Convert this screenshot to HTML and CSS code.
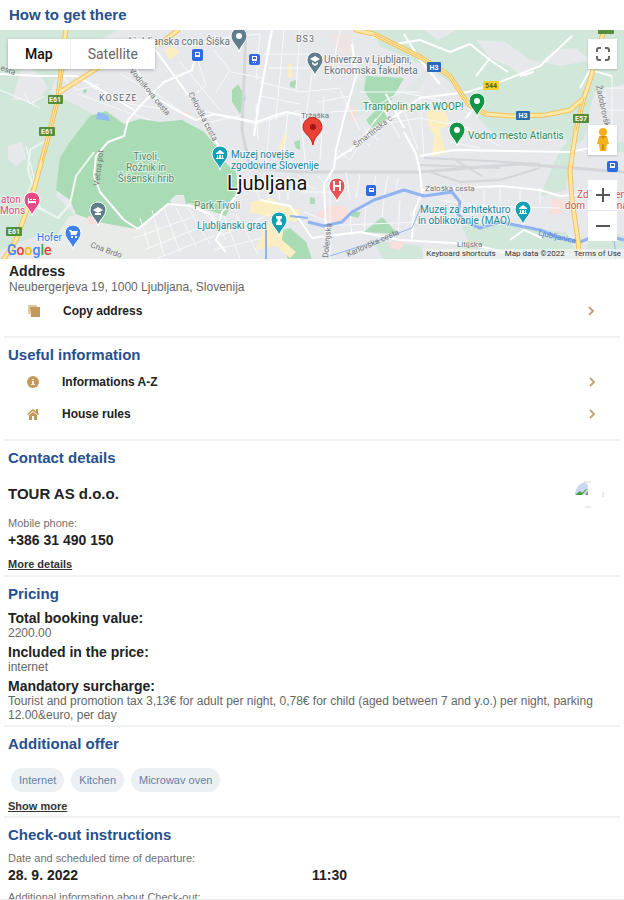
FILE: index.html
```html
<!DOCTYPE html>
<html lang="en">
<head>
<meta charset="utf-8">
<meta name="viewport" content="width=device-width, initial-scale=1">
<title>Booking details</title>
<link rel="stylesheet" href="styles.css">
</head>
<body>
<main class="page">
  <h2 class="title title-map">How to get there</h2>
  <div class="map">
    <svg class="map-canvas" viewBox="0 30 624 229" preserveAspectRatio="xMidYMid slice" role="img" aria-label="Map of Ljubljana">
      <defs>
        <path id="pin" d="M0 13C-1 7-8 3-8-3A8 8 0 0 1 8-3C8 3 1 7 0 13Z"/>
      </defs>
      <rect y="30" width="624" height="229" fill="#e6e8ec"/>
      <!-- parkland -->
      <g fill="#d1e7da">
        <path d="M0 30H118L100 40 84 64 58 74 50 92 82 108 110 124 90 134 66 160 56 196 74 214 70 224 56 240 36 236 0 250Z"/>
        <path d="M372 30H624V84L594 92 584 140 574 145 562 138 500 140 476 116 452 84 430 68 380 46Z"/>
        <path d="M440 56L400 96 366 72 352 88 344 122 360 116 380 108 412 100Z" opacity=".35"/>
        <path d="M560 150L576 132 566 190 540 196Z"/>
        <path d="M462 226L490 222 520 228 566 232 580 259H440L470 246Z"/>
        <path d="M372 240L420 246 426 259H384Z"/>
        <path d="M592 142H624V152H592ZM590 226L624 236V259H586Z"/>
      </g>
      <g fill="#e6e8ec">
        <path d="M12 100L22 66 40 74 48 88 34 104 20 100Z"/>
        <path d="M476 40L506 42 530 60 562 66 590 60 576 48 554 50 534 68 526 78 508 66 490 58Z"/>
        <path d="M424 30H456L438 40Z"/>
        <path d="M8 146L22 142 26 158 16 166 8 160Z"/>
      </g>
      <g fill="#e9ebe8"><path d="M70 216L150 222 176 232 160 259H20L56 236Z"/></g>
      <g fill="#a9dbb4">
        <path d="M70 142L90 116 106 111 124 124 140 119 160 122 182 120 204 132 216 146 220 158 236 172 238 188 226 216 208 210 190 203 178 206 168 204 136 229 98 222 76 214 70 200 56 190 60 158Z"/>
        <path d="M232 90L238 84 246 98 240 114 232 102Z"/>
        <path d="M366 76L404 78 390 102 384 112 388 118 372 128 366 120 376 110 370 100 364 90Z"/>
        <path d="M364 232L382 217 398 234Z"/>
        <path d="M276 232L290 228 306 242 312 259H288L282 246Z"/>
        <circle cx="85" cy="91" r="2"/><path d="M290 82L296 80 295 88 290 87ZM294 142L300 140V150L296 148ZM352 211L361 212 358 218 351 216ZM310 197L315 198V204H310Z"/>
      </g>
      <path d="M170 200L176 195H184L186 205L172 207Z" fill="#e6e8ec"/>
      <path d="M98 112L108 115 110 121 96 119Z" fill="#92b8f6"/>
      <g fill="#faeec2">
        <path d="M164 50L172 46 180 52 170 60ZM250 202L272 198 282 206 300 210 296 222 272 218 250 212ZM266 222L284 226 282 240 296 252 290 258 276 246 256 250ZM426 108L446 112 450 124 440 130 446 154 432 156 434 136 428 124ZM284 134L288 136 282 150 278 148ZM288 64H292V78H288Z"/>
      </g>
      <g fill="#f8dfdc">
        <path d="M316 214L328 206 346 206 350 216 344 224 320 218ZM552 198L564 200 562 214 548 214 552 206ZM182 112H190V118H182ZM350 104L356 110V122L350 120ZM390 242L406 240 400 250 390 248ZM88 216L98 218 98 224H88Z"/>
        <path d="M330 34L352 34 352 56 342 56Z" opacity=".5"/>
      </g>
      <!-- railway yard -->
      <g fill="none" stroke="#d3d6db">
        <path d="M246 30L242 130 250 168 300 172 420 172 520 164 624 172" stroke-width="3"/>
        <path d="M424 158L470 160 540 164M430 172L460 182 500 180 540 168M420 165L500 168M452 158L482 176" stroke-width="2"/>
      </g>
      <!-- side streets -->
      <g fill="none" stroke="#f8f9fb" stroke-width="1">
        <path d="M180 62L220 110M196 54L206 86 190 98M214 50L230 70 216 92M222 38L260 34 256 80M260 82L300 92 340 88M270 34L262 84M284 30L276 120M300 30L296 90M314 60L304 130M264 54H320M268 68H318M260 96L300 104M232 72L262 78M200 110L256 124 300 110M210 122L240 116M256 104L258 140M270 118L266 168M288 112L282 168M300 112L306 168M324 96L320 160M340 90L360 130M318 102L350 96M330 112L366 110M340 30L330 80M352 40L358 78M360 92H420M366 112L400 92 440 100M384 124L420 118 470 128M402 104L418 150M420 98L424 156M350 152L384 110 400 138M338 150L350 160 376 118M358 138L370 146M364 128L378 140M318 176L340 200M330 172V258M346 172L350 200M360 174L356 198M376 176L372 196M388 176L384 196M398 178L396 190M300 180L316 190M302 192H330M304 212L324 220M320 226L420 222M350 216L352 236M366 206L364 232M384 200L382 218M400 200L398 234M412 212V240M250 176L260 200M262 174L270 202M276 176L280 200M288 176V200M140 218L150 250M152 210L164 256M164 208L180 252M176 208L196 246M188 208L210 244M134 238L190 218M144 250L204 226M158 258L214 236M200 208L222 232M212 212L226 240M224 216L240 258M236 214L258 254M220 236L270 214M214 250L262 238M230 226L260 222M462 206L460 196M484 208V190M500 204V186M520 206V190M540 204V188M440 200L480 206 560 208M596 88H624M600 110H624M604 92V132M612 76V130M446 120L470 130 500 146M450 142L480 148"/>
        <path d="M26 146L34 178 24 202 50 214M0 90L24 100 40 108M24 92L30 104 44 96M60 76L78 90 100 84M78 94L110 106 150 120M90 86L130 104 170 110M120 74L160 96 190 118"/>
      </g>
      <!-- main streets -->
      <g fill="none" stroke="#fff" stroke-width="2" stroke-linejoin="round">
        <path d="M0 74L40 76 76 76 98 88 134 110"/>
        <path d="M154 48L176 78 196 106 214 138 222 152"/>
        <path d="M134 62L146 92 180 112 196 120 214 114 256 122 286 112 306 116"/>
        <path d="M196 52L192 70 174 78 164 82 140 106 128 120 124 136 108 142 96 156 94 176 100 192 124 220 138 229"/>
        <path d="M138 229L168 204 190 206 210 214 218 226 222 212 238 194 238 178"/>
        <path d="M94 152L76 176 70 204 58 218 40 208 28 170 30 150 50 138" stroke="#eef6f0"/>
        <path d="M168 38L148 52 154 70M272 30L258 108 254 136M352 44L356 76 344 118 336 150 334 168 324 184 326 232"/>
        <path d="M404 132L416 154 420 172 422 192 414 212 412 238"/>
        <path d="M334 160L350 150 384 124 420 98 468 92M404 128L386 94M468 92L500 82 540 66 572 36"/>
        <path d="M420 156L454 150 570 152 590 148M422 190L500 186 540 190 560 196 590 194"/>
        <path d="M312 238L360 232 400 240 470 244 520 256M222 228L216 240 226 252M260 200L290 206 312 238M440 84L420 60 404 34M466 118L480 100"/>
        <path d="M372 36L396 44 420 40 450 52 470 44 490 60 508 72M520 76L534 72M490 58L476 76M510 240L524 230 542 238M580 88L590 70 612 76"/>
      </g>
      <!-- river -->
      <g fill="none" stroke="#91b3f2" stroke-width="2" stroke-linejoin="round">
        <path d="M266 259V228M290 216L308 218"/>
        <path d="M308 222L324 226 342 222 352 212 374 200 404 190 424 196 452 192 460 202 458 214 466 222 480 228 500 222 520 226 540 230 560 238 580 242 600 234 624 240" stroke-width="3"/>
        <path d="M330 256L380 240 412 228 422 204M614 238L616 259" stroke-width="1"/>
      </g>
      <!-- motorways -->
      <g fill="none" stroke-linejoin="round" stroke-linecap="round">
        <path d="M66 28L58 98 48 138 32 196 16 240 2 262M60 92L104 64M178 30L160 44M356 30L374 34 422 58 450 76 468 104 486 114 510 116 546 115 570 110 584 98 590 80 604 30M584 98L576 130 570 170 572 200 578 240 580 262" stroke="#f3c15f" stroke-width="5"/>
        <path d="M66 28L58 98 48 138 32 196 16 240 2 262M60 92L104 64M178 30L160 44M356 30L374 34 422 58 450 76 468 104 486 114 510 116 546 115 570 110 584 98 590 80 604 30M584 98L576 130 570 170 572 200 578 240 580 262" stroke="#ffe7a6" stroke-width="3"/>
        <path d="M62 66L58 98 48 138 42 162M374 34L422 58 450 76 468 104 486 114M584 98L576 130" stroke="#f3c15f" stroke-width="1"/>
      </g>
      <!-- road shields -->
      <g class="shield">
        <g fill="#578c3a"><rect x="48" y="95" width="15" height="9" rx="1"/><rect x="39" y="127" width="16" height="9" rx="1"/><rect x="6" y="227" width="16" height="9" rx="1"/><rect x="573" y="114" width="16" height="9" rx="1"/><rect x="598" y="30" width="16" height="4" rx="1"/></g>
        <g fill="#2c69b5"><rect x="427" y="62" width="14" height="10" rx="1"/><rect x="516" y="111" width="14" height="9" rx="1"/></g>
        <rect x="483" y="81" width="16" height="9" rx="1" fill="#f7d02f"/>
        <g fill="#fff"><text x="55" y="102">E61</text><text x="47" y="134">E61</text><text x="14" y="234">E61</text><text x="581" y="121">E57</text><text x="434" y="70">H3</text><text x="523" y="118">H3</text></g>
        <text x="491" y="88" fill="#6a5a17">544</text>
      </g>
      <!-- transit stops -->
      <g fill="#2f6be0"><rect x="192" y="49" width="11" height="12" rx="2"/><rect x="249" y="54" width="11" height="11" rx="2"/><rect x="366" y="185" width="10" height="11" rx="2"/><rect x="607" y="161" width="11" height="11" rx="2"/></g>
      <g fill="#fff"><path d="M195 52H200V57H195ZM252 56H257V61H252ZM369 188H374V192H369ZM610 163H615V168H610ZM253 62H254V63H253ZM255 62H256V63H255Z"/></g>
      <g fill="#2f6be0"><path d="M196 53H199V55H196ZM253 57H256V59H253ZM611 164H614V166H611ZM370 189H373V190H370Z"/></g>
      <!-- street names -->
      <g class="street">
        <text transform="translate(129 71) rotate(50)">Vodnikova cesta</text>
        <text transform="translate(188 94) rotate(62)">Celovška cesta</text>
        <text transform="translate(99 186) rotate(-83)">Večna pot</text>
        <text transform="translate(90 247) rotate(20)">Cna Brdo</text>
        <text transform="translate(356 148) rotate(-38)">Šmartinska c.</text>
        <text transform="translate(596 86) rotate(78)">Žadobrovška</text>
        <text x="425" y="191">Zaloška cesta</text>
        <text transform="translate(348 257) rotate(-24)">Karlovška cesta</text>
        <text transform="translate(328 258) rotate(-84)">Dolenjska</text>
        <text x="457" y="247">Litijska</text>
        <text transform="translate(0 70) rotate(20)">esta</text>
        <text x="301" y="118">Tržaška</text>
        <text transform="translate(538 235) rotate(13)" fill="#4c7fd6">Ljubljanica</text>
      </g>
      <!-- places -->
      <g class="place">
        <g fill="#66747c"><text x="230" y="45" text-anchor="end">Ljubljanska cona Šiška</text><text x="324" y="63">Univerza v Ljubljani,</text><text x="324" y="74">Ekonomska fakulteta</text></g>
        <g fill="#2f8a56"><text x="363" y="110">Trampolin park WOOP!</text><text x="468" y="139">Vodno mesto Atlantis</text></g>
        <g fill="#55896a"><text x="146" y="160" text-anchor="middle">Tivoli,</text><text x="146" y="171" text-anchor="middle">Rožnik in</text><text x="146" y="182" text-anchor="middle">Šišenski hrib</text><text x="194" y="209">Park Tivoli</text></g>
        <g fill="#168799"><text x="231" y="158">Muzej novejše</text><text x="231" y="169">zgodovine Slovenije</text><text x="197" y="229">Ljubljanski grad</text><text x="420" y="213">Muzej za arhitekturo</text><text x="418" y="224">in oblikovanje (MAO)</text></g>
        <g fill="#dd4b83"><text x="1" y="203">aton</text><text x="0" y="214">Mons</text></g>
        <text x="37" y="241" fill="#3c73dc">Hofer</text>
        <g fill="#d4504c"><text x="577" y="198">Zdravstven</text><text x="565" y="209">dom Ljubljana</text></g>
        <g class="district"><text x="99" y="101">KOSEZE</text><text x="296" y="42">BS3</text></g>
      </g>
      <text class="city" x="227" y="190">Ljubljana</text>
      <!-- pins -->
      <g stroke="#fff" stroke-width="1">
        <use href="#pin" x="239" y="39" fill="#607d8b"/><use href="#pin" x="315" y="63" fill="#607d8b"/><use href="#pin" x="98" y="213" fill="#607d8b"/>
        <use href="#pin" x="477" y="104" fill="#159447"/><use href="#pin" x="457" y="133" fill="#159447"/>
        <use href="#pin" x="220" y="157" fill="#12a0b5"/><use href="#pin" x="279" y="223" fill="#12a0b5"/><use href="#pin" x="523" y="212" fill="#12a0b5"/>
        <use href="#pin" x="32" y="203" fill="#e94b86"/><use href="#pin" x="73" y="236" fill="#3e82ee"/><use href="#pin" x="337" y="189" fill="#e65453"/>
      </g>
      <g fill="#fff">
        <circle cx="239" cy="36" r="3"/><circle cx="477" cy="101" r="3"/><circle cx="457" cy="130" r="3"/>
        <path d="M310 59L315 56 320 59 315 62ZM312 62L315 64 318 62V64L315 66 312 64ZM93 210L98 207 103 210 98 213ZM95 213H101V215H95Z"/>
        <path id="museum" d="M216 153L220 150 224 153V154H216ZM217 155H218V158H217ZM219 155H221V158H219ZM222 155H223V158H222ZM216 158H224V159H216Z"/>
        <use href="#museum" x="303" y="55"/>
        <path d="M276 216H282V218L280 220 282 223V225H276V223L278 220 276 218Z"/>
        <path d="M28 198H29V201H36V204H35V203H29V204H28ZM30 199H32V200H30ZM33 199H36V200H33Z"/>
        <path d="M69 230H71L72 231H78L76 235H71L70 231H69ZM71 236H73V238H71ZM75 236H77V238H75Z"/>
        <path d="M333 181H335V185H339V181H341V191H339V187H335V191H333Z"/>
      </g>
      <path d="M313 145C311 135 303 134 303 127A9 9 0 0 1 322 127C322 134 314 135 313 145Z" fill="#ea4335" stroke="#c5221f"/>
      <circle cx="313" cy="127" r="3" fill="#a31515"/>
      <text class="google" x="7" y="255"><tspan fill="#4285f4">G</tspan><tspan fill="#ea4335">o</tspan><tspan fill="#fbbc05">o</tspan><tspan fill="#4285f4">g</tspan><tspan fill="#34a853">l</tspan><tspan fill="#ea4335">e</tspan></text>
    </svg>
    <div class="map-types">
      <button class="map-type active" type="button">Map</button>
      <button class="map-type" type="button">Satellite</button>
    </div>
    <div class="map-tools">
      <button class="tool" type="button" aria-label="Full screen"><svg width="16" height="16" viewBox="0 0 16 16" fill="none" stroke="#666" stroke-width="2"><path d="M2 6V4Q2 2 4 2H6M10 2H12Q14 2 14 4V6M14 10V12Q14 14 12 14H10M6 14H4Q2 14 2 12V10"/></svg></button>
      <button class="tool tool-person" type="button" aria-label="Street View"><svg width="14" height="24" viewBox="0 0 14 24"><circle cx="7" cy="4" r="4" fill="#f4b21b"/><path d="M3 8H11L13 16H11L10 23H4L3 16H1Z" fill="#f4b21b"/><path d="M4 8H10L7 11ZM6 16H8V22H6Z" fill="#d58b13"/></svg></button>
      <div class="zoom">
        <button class="tool" type="button" aria-label="Zoom in"><svg width="14" height="14" viewBox="0 0 14 14" stroke="#555" stroke-width="2"><path d="M0 7H14M7 0V14"/></svg></button>
        <button class="tool" type="button" aria-label="Zoom out"><svg width="14" height="14" viewBox="0 0 14 14" stroke="#555" stroke-width="2"><path d="M0 7H14"/></svg></button>
      </div>
    </div>
    <div class="map-legal"><a href="#">Keyboard shortcuts</a><span>Map data ©2022</span><a href="#">Terms of Use</a></div>
  </div>

  <section class="block address">
    <h3 class="label">Address</h3>
    <p class="text">Neubergerjeva 19, 1000 Ljubljana, Slovenija</p>
    <button class="row" type="button">
      <svg class="row-icon" viewBox="0 0 14 14"><path d="M1 1H10V3H3V10H1Z" fill="#e0c79c"/><path d="M3 3H13V13H4Z" fill="#c2995a"/></svg>
      <span class="row-label">Copy address</span>
      <svg class="chevron" viewBox="0 0 8 10"><path d="M2 1L6 5L2 9"/></svg>
    </button>
  </section>

  <section class="block useful">
    <h2 class="title">Useful information</h2>
    <a class="row" href="#">
      <svg class="row-icon" viewBox="0 0 14 14"><circle cx="7" cy="7" r="6" fill="#c2995a"/><path d="M6 4H8V5H6ZM6 6H8V9H9V10H5V9H6Z" fill="#f6eddc"/></svg>
      <span class="row-label">Informations A-Z</span>
      <svg class="chevron" viewBox="0 0 8 10"><path d="M2 1L6 5L2 9"/></svg>
    </a>
    <a class="row" href="#">
      <svg class="row-icon" viewBox="0 0 14 14"><path d="M1 7L7 2 10 4V2H12V6L13 7 12 8 7 4 2 8Z" fill="#c2995a"/><path d="M3 8L7 5 11 8V13H8V9H6V13H3Z" fill="#c2995a"/></svg>
      <span class="row-label">House rules</span>
      <svg class="chevron" viewBox="0 0 8 10"><path d="M2 1L6 5L2 9"/></svg>
    </a>
  </section>

  <section class="block contact">
    <h2 class="title">Contact details</h2>
    <div class="company">
      <h3 class="company-name">TOUR AS d.o.o.</h3>
      <svg class="avatar" viewBox="0 0 30 30" role="img" aria-label="Company logo">
        <path d="M1 14Q3 5 11 3L14 6V15H1Z" fill="#cbd8f5"/><path d="M1 16L6 12 8 14 12 10H13L8 16Z" fill="#48a23c"/><path d="M11 16L14 12V16Z" fill="#888"/><path d="M10 3H17M11 28H17M29 13V18" stroke="#d5d5d5"/>
      </svg>
    </div>
    <p class="small">Mobile phone:</p>
    <p class="strong">+386 31 490 150</p>
    <a class="more" href="#">More details</a>
  </section>

  <section class="block pricing">
    <h2 class="title">Pricing</h2>
    <dl class="prices">
      <dt class="label">Total booking value:</dt><dd class="text">2200.00</dd>
      <dt class="label">Included in the price:</dt><dd class="text">internet</dd>
      <dt class="label">Mandatory surcharge:</dt><dd class="text">Tourist and promotion tax 3,13€ for adult per night, 0,78€ for child (aged between 7 and y.o.) per night, parking 12.00&amp;euro, per day</dd>
    </dl>
  </section>

  <section class="block offer">
    <h2 class="title">Additional offer</h2>
    <ul class="chips"><li>Internet</li><li>Kitchen</li><li>Microwav oven</li></ul>
    <a class="more" href="#">Show more</a>
  </section>

  <section class="block checkout">
    <h2 class="title">Check-out instructions</h2>
    <p class="small">Date and scheduled time of departure:</p>
    <div class="departure"><span class="strong">28. 9. 2022</span><span class="strong">11:30</span></div>
    <p class="small">Additional information about Check-out:</p>
  </section>
</main>
</body>
</html>
```
FILE: styles.css
```css
* { box-sizing: border-box; }
body, h2, h3, p, dl, dd, ul { margin: 0; padding: 0; }
body { background: #fff; color: #222; font-family: "Liberation Sans", Arial, sans-serif; }
button { border: 0; padding: 0; background: none; font: inherit; color: inherit; }

.page { height: 100vh; overflow: hidden auto; scrollbar-width: none; border-bottom: 1px solid #e8e8e8; }

.title { font-size: 15px; line-height: 20px; font-weight: 700; color: #26508e; }
.title-map { padding: 5px 9px; }
.label { font-size: 14px; line-height: 16px; font-weight: 700; }
.text { font-size: 12px; line-height: 14px; color: #666; }
.small { font-size: 11px; line-height: 14px; color: #707070; }
.strong { font-size: 14px; line-height: 20px; font-weight: 700; }
.more { display: block; width: max-content; font-size: 11px; line-height: 14px; font-weight: 700; color: #333; text-decoration: underline; }

/* Map */
.map { position: relative; height: 229px; font-family: Roboto, sans-serif; }
.map-canvas { display: block; width: 100%; height: 100%; }
.shield { font-size: 7px; font-weight: 700; text-anchor: middle; }
.street { font-size: 8px; fill: #777; }
.place { font-size: 10px; stroke: #fff; stroke-opacity: .6; stroke-width: 2px; }
.place text { paint-order: stroke; }
.place .district { font-size: 9px; letter-spacing: 1px; fill: #666; }
.city { font-size: 20px; fill: #111; stroke: #fff; stroke-width: 2px; paint-order: stroke; }
.google { font-size: 14px; font-weight: 500; }
.map-types { position: absolute; top: 9px; left: 8px; display: flex; background: #fff; box-shadow: 0 1px 3px #0004; }
.map-type { height: 30px; padding: 0 17px; font-size: 14px; color: #666; }
.map-type.active { color: #111; border-right: 1px solid #eee; font-weight: 500; }
.map-tools { position: absolute; top: 9px; right: 7px; width: 29px; display: flex; flex-direction: column; gap: 25px; }
.tool { display: grid; place-items: center; width: 100%; height: 30px; background: #fff; box-shadow: 0 1px 2px #0003; }
.tool-person { margin-top: 31px; }
.zoom .tool { box-shadow: none; }
.zoom .tool + .tool { height: 31px; border-top: 1px solid #e6e6e6; }
.map-legal { position: absolute; right: 0; bottom: 0; display: flex; gap: 9px; padding: 0 3px; font-size: 8px; line-height: 10px; color: #333; background: #f5f5f5b0; }
.map-legal a { color: inherit; text-decoration: none; }

/* Sections */
.block { margin: 0 4px; padding: 7px 4px 0; border-bottom: 2px solid #f0f2f3; }
.row { display: flex; align-items: center; width: 100%; height: 32px; padding: 0 20px 0 18px; color: #222; text-align: left; text-decoration: none; }
.row-icon { width: 14px; height: 14px; }
.row-label { flex: 1; margin-left: 22px; font-size: 12px; font-weight: 700; }
.chevron { width: 8px; height: 10px; fill: none; stroke: #c4a576; stroke-width: 2px; }

.address { padding: 4px 5px 9px; }
.address .text { line-height: 16px; }
.useful { padding-bottom: 9px; }
.useful .title { margin-bottom: 1px; }
.company { display: flex; align-items: center; justify-content: space-between; height: 36px; margin: 8px 0 4px; padding-right: 12px; }
.company-name { font-size: 15px; line-height: 20px; font-weight: 700; }
.avatar { width: 30px; height: 30px; }
.contact .more { margin: 7px 0 4px; }
.prices { margin-top: 6px; padding-bottom: 3px; }
.prices .text + .label { margin-top: 4px; }
.chips { display: flex; gap: 7px; margin: 14px 3px 7px; list-style: none; }
.chips li { padding: 0 8px; border-radius: 12px; background: #ebf0f4; color: #64809f; font-size: 11px; line-height: 24px; }
.offer .more { margin-bottom: 3px; }
.checkout { border-bottom: 0; }
.checkout .title { margin-bottom: 6px; }
.departure { display: grid; grid-template-columns: 1fr 1fr; margin-bottom: 5px; }
```
